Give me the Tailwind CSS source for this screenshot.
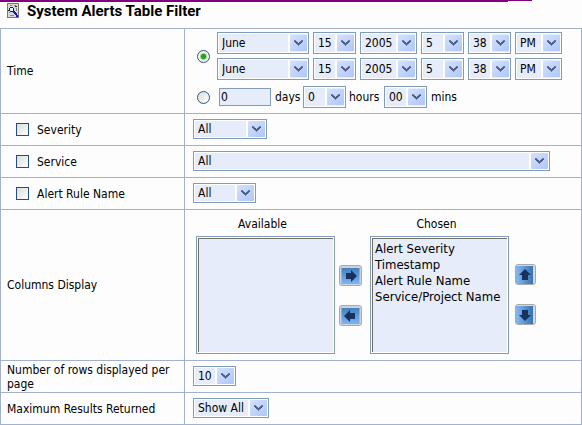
<!DOCTYPE html>
<html lang="en">
<head>
    <meta charset="UTF-8">
    <meta name="viewport" content="width=device-width, initial-scale=1.0">
    <title>System Alerts Table Filter</title>
    <script src="https://cdn.jsdelivr.net/npm/@tailwindcss/browser@4"></script>
</head>
<body class="bg-[#fdfdfe] font-['DejaVu_Sans_Condensed','DejaVu_Sans',sans-serif] text-[12px] leading-[14px] text-black">
    <!-- Shared symbols -->
    <svg class="absolute size-0" aria-hidden="true">
        <defs>
            <linearGradient id="drop-fill" x1="0" y1="0" x2="1" y2="1">
                <stop offset="0" stop-color="#d5e1fd" />
                <stop offset="1" stop-color="#afc6fa" />
            </linearGradient>
            <linearGradient id="move-fill" x1="0" y1="0" x2="0" y2="1">
                <stop offset="0" stop-color="#4480bb" />
                <stop offset="1" stop-color="#7db4f2" />
            </linearGradient>
            <linearGradient id="order-fill" x1="0" y1="0" x2="1" y2="0">
                <stop offset="0" stop-color="#86b9f4" />
                <stop offset="1" stop-color="#3873ad" />
            </linearGradient>
        </defs>
        <symbol id="drop" viewBox="0 0 17 18" preserveAspectRatio="none">
            <rect width="17" height="18" rx="1" fill="url(#drop-fill)" />
            <path d="M4 6h2v1h1v1h1v1h1v-1h1v-1h1v-1h2v2h-1v1h-1v1h-1v1h-1v1h-1v-1h-1v-1h-1v-1h-1v-1h-1z" fill="#4d6185" />
        </symbol>
    </svg>

    <header>
        <div class="mr-[50px] h-px bg-[#800080]"></div>
        <div class="mr-[74px] h-px bg-[#800080]"></div>
        <div class="flex h-[26px] items-start gap-2 pl-[7px]">
            <svg class="mt-px h-[15px] w-3" viewBox="0 0 12 15" shape-rendering="crispEdges">
                <rect x="0.5" y="0.5" width="11" height="14" fill="#d8d8d8" stroke="#777" />
                <path d="M3 2h2v1H3zM7 2h2v1H7zM2 9h1v1H2zM3 12h4v1H3zM9 5h1v3H9z" fill="#888" />
                <path d="M3 4h3v1H3zM2 5h1v3H2zM6 5h1v3H6zM3 8h3v1H3zM8 3h2v1H8zM1 7h1v1H1z" fill="#222" />
                <path d="M3 5h3v3H3z" fill="#dff4ff" />
                <path d="M6 8h2v1h1v1h1v2h1v2H9v-2H8v-1H7v-1H6z" fill="#1414e0" />
            </svg>
            <h1 class="font-[Roboto,sans-serif] text-[15px] leading-[18px] font-bold">System Alerts Table Filter</h1>
        </div>
    </header>

    <table class="w-full table-fixed border-collapse [&_td]:border [&_td]:border-[#a3b2cc] [&_th]:border [&_th]:border-[#a3b2cc] [&_th]:text-left [&_th]:font-normal">
        <colgroup>
            <col class="w-[184px]">
            <col>
        </colgroup>
        <tr class="h-[85px]">
            <th scope="row" class="pl-[6px]">Time</th>
            <td class="pb-[2px] pl-3">
                <div class="flex items-center gap-[7px]">
                    <input type="radio" name="time" checked aria-label="Between dates" class="size-[13px] shrink-0 appearance-none rounded-full border border-[#2a5684] bg-[radial-gradient(circle,#21a121_0_2px,#8bd58b_3px,#f4f4f0_4px)]">
                    <div class="flex flex-col gap-1">
                        <div class="flex gap-1">
                            <div class="relative w-[92px]">
                                <select aria-label="From month" class="block h-[22px] w-full appearance-none border border-[#7f9db9] bg-[#e6ecfa] pl-1 inset-ring inset-ring-white"><option>June</option></select>
                                <svg class="pointer-events-none absolute inset-y-px right-px h-5 w-5 border-2 border-y border-r-0 border-white py-px pr-px"><use href="#drop" /></svg>
                            </div>
                            <div class="relative w-[43px]">
                                <select aria-label="From day" class="block h-[22px] w-full appearance-none border border-[#7f9db9] bg-[#e6ecfa] pl-1 inset-ring inset-ring-white"><option>15</option></select>
                                <svg class="pointer-events-none absolute inset-y-px right-px h-5 w-5 border-2 border-y border-r-0 border-white py-px pr-px"><use href="#drop" /></svg>
                            </div>
                            <div class="relative w-[57px]">
                                <select aria-label="From year" class="block h-[22px] w-full appearance-none border border-[#7f9db9] bg-[#e6ecfa] pl-1 inset-ring inset-ring-white"><option>2005</option></select>
                                <svg class="pointer-events-none absolute inset-y-px right-px h-5 w-5 border-2 border-y border-r-0 border-white py-px pr-px"><use href="#drop" /></svg>
                            </div>
                            <div class="relative w-[43px]">
                                <select aria-label="From hour" class="block h-[22px] w-full appearance-none border border-[#7f9db9] bg-[#e6ecfa] pl-1 inset-ring inset-ring-white"><option>5</option></select>
                                <svg class="pointer-events-none absolute inset-y-px right-px h-5 w-5 border-2 border-y border-r-0 border-white py-px pr-px"><use href="#drop" /></svg>
                            </div>
                            <div class="relative w-[43px]">
                                <select aria-label="From minute" class="block h-[22px] w-full appearance-none border border-[#7f9db9] bg-[#e6ecfa] pl-1 inset-ring inset-ring-white"><option>38</option></select>
                                <svg class="pointer-events-none absolute inset-y-px right-px h-5 w-5 border-2 border-y border-r-0 border-white py-px pr-px"><use href="#drop" /></svg>
                            </div>
                            <div class="relative w-[47px]">
                                <select aria-label="From AM or PM" class="block h-[22px] w-full appearance-none border border-[#7f9db9] bg-[#e6ecfa] pl-1 inset-ring inset-ring-white"><option>PM</option></select>
                                <svg class="pointer-events-none absolute inset-y-px right-px h-5 w-5 border-2 border-y border-r-0 border-white py-px pr-px"><use href="#drop" /></svg>
                            </div>
                        </div>
                        <div class="flex gap-1">
                            <div class="relative w-[92px]">
                                <select aria-label="To month" class="block h-[22px] w-full appearance-none border border-[#7f9db9] bg-[#e6ecfa] pl-1 inset-ring inset-ring-white"><option>June</option></select>
                                <svg class="pointer-events-none absolute inset-y-px right-px h-5 w-5 border-2 border-y border-r-0 border-white py-px pr-px"><use href="#drop" /></svg>
                            </div>
                            <div class="relative w-[43px]">
                                <select aria-label="To day" class="block h-[22px] w-full appearance-none border border-[#7f9db9] bg-[#e6ecfa] pl-1 inset-ring inset-ring-white"><option>15</option></select>
                                <svg class="pointer-events-none absolute inset-y-px right-px h-5 w-5 border-2 border-y border-r-0 border-white py-px pr-px"><use href="#drop" /></svg>
                            </div>
                            <div class="relative w-[57px]">
                                <select aria-label="To year" class="block h-[22px] w-full appearance-none border border-[#7f9db9] bg-[#e6ecfa] pl-1 inset-ring inset-ring-white"><option>2005</option></select>
                                <svg class="pointer-events-none absolute inset-y-px right-px h-5 w-5 border-2 border-y border-r-0 border-white py-px pr-px"><use href="#drop" /></svg>
                            </div>
                            <div class="relative w-[43px]">
                                <select aria-label="To hour" class="block h-[22px] w-full appearance-none border border-[#7f9db9] bg-[#e6ecfa] pl-1 inset-ring inset-ring-white"><option>5</option></select>
                                <svg class="pointer-events-none absolute inset-y-px right-px h-5 w-5 border-2 border-y border-r-0 border-white py-px pr-px"><use href="#drop" /></svg>
                            </div>
                            <div class="relative w-[43px]">
                                <select aria-label="To minute" class="block h-[22px] w-full appearance-none border border-[#7f9db9] bg-[#e6ecfa] pl-1 inset-ring inset-ring-white"><option>38</option></select>
                                <svg class="pointer-events-none absolute inset-y-px right-px h-5 w-5 border-2 border-y border-r-0 border-white py-px pr-px"><use href="#drop" /></svg>
                            </div>
                            <div class="relative w-[47px]">
                                <select aria-label="To AM or PM" class="block h-[22px] w-full appearance-none border border-[#7f9db9] bg-[#e6ecfa] pl-1 inset-ring inset-ring-white"><option>PM</option></select>
                                <svg class="pointer-events-none absolute inset-y-px right-px h-5 w-5 border-2 border-y border-r-0 border-white py-px pr-px"><use href="#drop" /></svg>
                            </div>
                        </div>
                    </div>
                </div>
                <div class="mt-[6px] flex items-center">
                    <input type="radio" name="time" aria-label="Time span" class="size-[13px] shrink-0 appearance-none rounded-full border border-[#2a5684] bg-linear-to-br from-[#dcdcd7] to-white">
                    <input type="text" id="days" value="0" class="ml-[9px] h-[18px] w-[52px] border border-[#7f9db9] bg-[#e6ecfa] pl-px">
                    <label for="days" class="w-8 pl-1">days</label>
                    <div class="relative w-[43px]">
                        <select id="hours" class="block h-[22px] w-full appearance-none border border-[#7f9db9] bg-[#e6ecfa] pl-1 inset-ring inset-ring-white"><option>0</option></select>
                        <svg class="pointer-events-none absolute inset-y-px right-px h-5 w-5 border-2 border-y border-r-0 border-white py-px pr-px"><use href="#drop" /></svg>
                    </div>
                    <label for="hours" class="w-[38px] pl-[3px]">hours</label>
                    <div class="relative w-[43px]">
                        <select id="mins" class="block h-[22px] w-full appearance-none border border-[#7f9db9] bg-[#e6ecfa] pl-1 inset-ring inset-ring-white"><option>00</option></select>
                        <svg class="pointer-events-none absolute inset-y-px right-px h-5 w-5 border-2 border-y border-r-0 border-white py-px pr-px"><use href="#drop" /></svg>
                    </div>
                    <label for="mins" class="pl-1">mins</label>
                </div>
            </td>
        </tr>
        <tr class="h-8">
            <th scope="row" class="pl-[15px]">
                <label class="flex items-center gap-2"><input type="checkbox" class="size-[13px] appearance-none border border-[#1c5180] bg-linear-to-br from-[#dcdcd7] to-white">Severity</label>
            </th>
            <td class="pb-[2px] pl-2">
                <div class="relative w-[74px]">
                    <select aria-label="Severity" class="block h-5 w-full appearance-none border border-[#7f9db9] bg-[#e6ecfa] pl-1 inset-ring inset-ring-white"><option>All</option></select>
                    <svg class="pointer-events-none absolute inset-y-px right-px h-[18px] w-5 border-2 border-y border-r-0 border-white pr-px"><use href="#drop" /></svg>
                </div>
            </td>
        </tr>
        <tr class="h-8">
            <th scope="row" class="pl-[15px]">
                <label class="flex items-center gap-2"><input type="checkbox" class="size-[13px] appearance-none border border-[#1c5180] bg-linear-to-br from-[#dcdcd7] to-white">Service</label>
            </th>
            <td class="pr-[31px] pb-[2px] pl-2">
                <div class="relative">
                    <select aria-label="Service" class="block h-5 w-full appearance-none border border-[#7f9db9] bg-[#e6ecfa] pl-1 inset-ring inset-ring-white"><option>All</option></select>
                    <svg class="pointer-events-none absolute inset-y-px right-px h-[18px] w-5 border-2 border-y border-r-0 border-white pr-px"><use href="#drop" /></svg>
                </div>
            </td>
        </tr>
        <tr class="h-8">
            <th scope="row" class="pl-[15px]">
                <label class="flex items-center gap-2"><input type="checkbox" class="size-[13px] appearance-none border border-[#1c5180] bg-linear-to-br from-[#dcdcd7] to-white">Alert Rule Name</label>
            </th>
            <td class="pb-[2px] pl-2">
                <div class="relative w-[63px]">
                    <select aria-label="Alert Rule Name" class="block h-5 w-full appearance-none border border-[#7f9db9] bg-[#e6ecfa] pl-1 inset-ring inset-ring-white"><option>All</option></select>
                    <svg class="pointer-events-none absolute inset-y-px right-px h-[18px] w-5 border-2 border-y border-r-0 border-white pr-px"><use href="#drop" /></svg>
                </div>
            </td>
        </tr>
        <tr class="h-[151px]">
            <th scope="row" class="pl-[6px]">Columns Display</th>
            <td class="pl-[11px]">
                <div class="flex">
                    <div class="w-[139px]">
                        <label for="available" class="block pb-[5px] pr-[6px] text-center">Available</label>
                        <select id="available" multiple class="block h-[118px] w-full appearance-none overflow-hidden border border-[#7f9db9] bg-[#e6ecfa] p-0 shadow-[inset_0_0_0_1px_#fff,inset_2px_2px_0_#716f64,inset_-2px_-2px_0_#f1efe2]"></select>
                    </div>
                    <div class="flex w-[35px] flex-col items-start gap-[19px] pt-12 pl-1">
                        <button type="button" aria-label="Add column">
                            <svg class="h-[21px] w-[23px]" viewBox="0 0 23 21">
                                <rect x="0.5" y="0.5" width="22" height="20" rx="2.5" fill="#c9d3df" stroke="#a9a9a9" />
                                <rect x="2.5" y="3" width="18" height="16" fill="url(#move-fill)" />
                                <path d="M7 8h5V5l6 6-6 6v-3H7z" fill="#17325f" />
                            </svg>
                        </button>
                        <button type="button" aria-label="Remove column">
                            <svg class="h-[21px] w-[23px]" viewBox="0 0 23 21">
                                <rect x="0.5" y="0.5" width="22" height="20" rx="2.5" fill="#c9d3df" stroke="#a9a9a9" />
                                <rect x="2.5" y="3" width="18" height="16" fill="url(#move-fill)" />
                                <path d="M16 8h-5V5l-6 6 6 6v-3h5z" fill="#17325f" />
                            </svg>
                        </button>
                    </div>
                    <div class="w-[139px]">
                        <label for="chosen" class="block pb-[5px] pr-[6px] text-center">Chosen</label>
                        <select id="chosen" multiple class="block h-[118px] w-full appearance-none overflow-hidden border border-[#7f9db9] bg-[#e6ecfa] px-[2px] py-1 text-[13px] shadow-[inset_0_0_0_1px_#fff,inset_2px_2px_0_#716f64,inset_-2px_-2px_0_#f1efe2] [&_option]:h-4 [&_option]:min-h-4 [&_option]:p-0 [&_option]:pl-[2px] [&_option]:leading-4">
                            <option>Alert Severity</option>
                            <option>Timestamp</option>
                            <option>Alert Rule Name</option>
                            <option>Service/Project Name</option>
                        </select>
                    </div>
                    <div class="flex w-8 flex-col items-center gap-[19px] pt-[47px]">
                        <button type="button" aria-label="Move up">
                            <svg class="h-[21px] w-[21px]" viewBox="0 0 21 21">
                                <rect x="0.5" y="0.5" width="20" height="20" rx="2.5" fill="#d3d9e0" stroke="#a9a9a9" />
                                <rect x="1" y="2" width="17" height="18" fill="url(#order-fill)" />
                                <path d="M10 5l6 6h-3v5H7v-5H4z" fill="#17325f" />
                            </svg>
                        </button>
                        <button type="button" aria-label="Move down">
                            <svg class="h-[21px] w-[21px]" viewBox="0 0 21 21">
                                <rect x="0.5" y="0.5" width="20" height="20" rx="2.5" fill="#d3d9e0" stroke="#a9a9a9" />
                                <rect x="1" y="2" width="17" height="18" fill="url(#order-fill)" />
                                <path d="M10 17l6-6h-3V6H7v5H4z" fill="#17325f" />
                            </svg>
                        </button>
                    </div>
                </div>
            </td>
        </tr>
        <tr class="h-8">
            <th scope="row" class="pl-[6px]"><label for="rows">Number of rows displayed per page</label></th>
            <td class="pb-[2px] pl-2">
                <div class="relative w-[43px]">
                    <select id="rows" class="block h-5 w-full appearance-none border border-[#7f9db9] bg-[#e6ecfa] pl-1 inset-ring inset-ring-white"><option>10</option></select>
                    <svg class="pointer-events-none absolute inset-y-px right-px h-[18px] w-5 border-2 border-y border-r-0 border-white pr-px"><use href="#drop" /></svg>
                </div>
            </td>
        </tr>
        <tr class="h-8">
            <th scope="row" class="pl-[6px]"><label for="max">Maximum Results Returned</label></th>
            <td class="pb-[2px] pl-2">
                <div class="relative w-[76px]">
                    <select id="max" class="block h-5 w-full appearance-none border border-[#7f9db9] bg-[#e6ecfa] pl-1 inset-ring inset-ring-white"><option>Show All</option></select>
                    <svg class="pointer-events-none absolute inset-y-px right-px h-[18px] w-5 border-2 border-y border-r-0 border-white pr-px"><use href="#drop" /></svg>
                </div>
            </td>
        </tr>
    </table>
</body>
</html>
